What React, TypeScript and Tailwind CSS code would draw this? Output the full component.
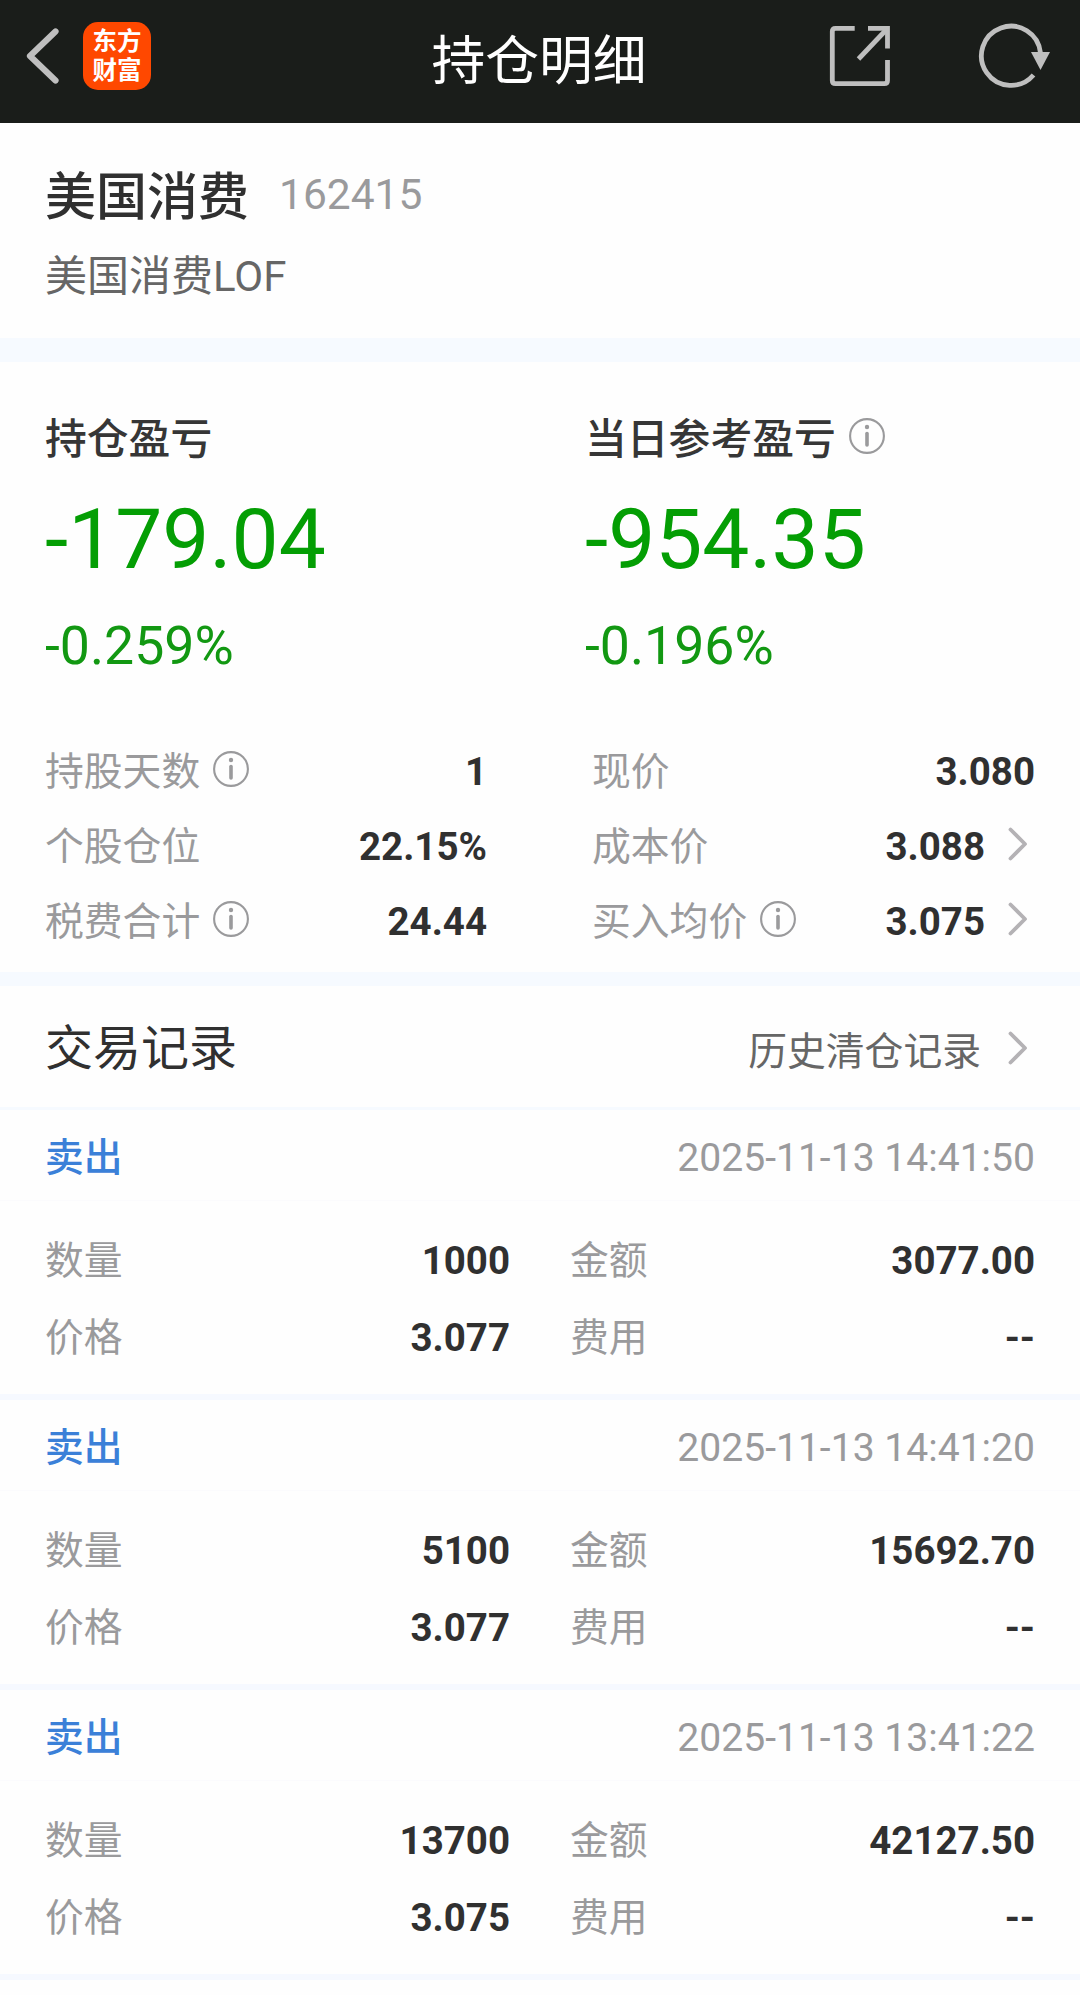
import React from "react";

function InfoIcon() {
  return (
    <svg className="h-9 w-9 shrink-0" viewBox="0 0 36 36" fill="none">
      <circle cx="18" cy="18" r="16.9" stroke="#9a9a9c" strokeWidth="2.1" />
      <circle cx="18" cy="9" r="2.2" fill="#9a9a9c" />
      <path d="M18 15.5V27" stroke="#9a9a9c" strokeWidth="3.6" strokeLinecap="round" />
    </svg>
  );
}

function Chevron() {
  return (
    <svg className="h-9 w-5 shrink-0" viewBox="0 0 20 36" fill="none">
      <path d="M2.5 3.5L17 18L2.5 32.5" stroke="#b4b2b5" strokeWidth="3.8" strokeLinecap="round" strokeLinejoin="round" />
    </svg>
  );
}

function Header() {
  return (
    <header className="grid h-[123px] grid-cols-3 items-start bg-[#1a1d1a] text-white">
      <div className="flex pl-6 pt-[22px]">
        <svg className="h-[68px] w-9" viewBox="0 0 36 68" fill="none">
          <path d="M31.5 9.5L6 34L31.5 58.5" stroke="#bfbfbf" strokeWidth="6.2" strokeLinecap="round" strokeLinejoin="round" />
        </svg>
        <div className="ml-[23px] h-[68px] w-[68px] rounded-[15px] bg-[#ff4800] pt-[5px] text-center text-[24.5px] leading-[29px] font-bold">
          <div>东方</div>
          <div>财富</div>
        </div>
      </div>
      <h1 className="h-[116px] pt-[1.5px] pr-[2px] text-center text-[53.8px] leading-[120px]">持仓明细</h1>
      <div className="flex justify-end gap-[84px] pr-[28px] pt-[22px]">
        <svg className="h-[68px] w-[66px]" viewBox="0 0 66 68" fill="none" stroke="#bfbfbf" strokeWidth="4.8">
          <path d="M28.7 6.3H9.5Q6.3 6.3 6.3 9.5V58.5Q6.3 61.7 9.5 61.7H58.3Q61.5 61.7 61.5 58.5V38" />
          <path d="M42 6.3H61.5V26.5" />
          <path d="M32.5 37L60.5 7.5" />
        </svg>
        <svg className="h-[68px] w-[76px]" viewBox="0 0 76 68" fill="none">
          <path d="M64.5 31A29.6 29.6 0 1 0 57.5 53" stroke="#bfbfbf" strokeWidth="4.8" />
          <path d="M55 30H74L64.5 48Z" fill="#bfbfbf" />
        </svg>
      </div>
    </header>
  );
}

function Profit({ label, value, percent, info }: { label: string; value: string; percent: string; info?: boolean }) {
  return (
    <div className="w-[540px] shrink-0">
      <div className="flex h-[50px] items-center gap-[13px]">
        <span className="pt-[2px] text-[41.8px] leading-[50px] font-medium text-[#363636]">{label}</span>
        {info && (
          <span className="pb-[6px]">
            <InfoIcon />
          </span>
        )}
      </div>
      <div className="mt-[25px] h-[100px] text-[83.8px] leading-[100px] text-[#049e04]">{value}</div>
      <div className="mt-[24px] h-[68px] text-[53.6px] leading-[66px] text-[#129812]">{percent}</div>
    </div>
  );
}

function Stat({ label, value, info, arrow }: { label: string; value: string; info?: boolean; arrow?: boolean }) {
  return (
    <div className="flex h-[75px] items-center">
      <span className="text-[38.8px] leading-[75px] text-[#9a9a9c]">{label}</span>
      {info && (
        <span className="ml-[13px] pb-[5px]">
          <InfoIcon />
        </span>
      )}
      <span className="ml-auto pb-px text-[38.5px] leading-[75px] font-bold text-[#303030]">{value}</span>
      {arrow && (
        <span className="mr-[7px] ml-[23px] pb-[5px]">
          <Chevron />
        </span>
      )}
    </div>
  );
}

function Field({ label, value }: { label: string; value: string }) {
  return (
    <div className="flex h-[77px] items-center justify-between leading-[77px]">
      <span className="text-[38.8px] text-[#9a9a9c]">{label}</span>
      <span className="pb-px text-[38.5px] font-bold text-[#303030]">{value}</span>
    </div>
  );
}

type Trade = { time: string; count: string; amount: string; price: string };

function Record({ time, count, amount, price }: Trade) {
  return (
    <article className="h-[290px] border-b-[6px] border-[#f6f9ff]">
      <div className="flex h-[91px] items-center justify-between border-b border-[#fbfbfd] px-[45px] pt-[5px] leading-[85px]">
        <span className="text-[38.8px] font-medium text-[#3b80d8]">卖出</span>
        <span className="pt-px text-[39.1px] text-[#9a9a9c]">{time}</span>
      </div>
      <div className="grid grid-cols-[465px_465px] gap-x-[60px] pl-[45px] pt-[21px]">
        <Field label="数量" value={count} />
        <Field label="金额" value={amount} />
        <Field label="价格" value={price} />
        <Field label="费用" value="--" />
      </div>
    </article>
  );
}

const trades: Trade[] = [
  { time: "2025-11-13 14:41:50", count: "1000", amount: "3077.00", price: "3.077" },
  { time: "2025-11-13 14:41:20", count: "5100", amount: "15692.70", price: "3.077" },
  { time: "2025-11-13 13:41:22", count: "13700", amount: "42127.50", price: "3.075" },
];

export default function App() {
  return (
    <div className="h-[1995px] w-[1080px] overflow-hidden bg-[#fefefe] font-['Roboto','Noto_Sans_CJK_SC',sans-serif]">
      <Header />
      <section className="h-[215px] px-[45px] pt-[42px]">
        <div className="flex h-[62px] items-center leading-[62px]">
          <span className="pt-[3px] text-[51px] font-medium text-[#303030]">美国消费</span>
          <span className="ml-[30px] pb-[2px] text-[42.5px] text-[#9a9a9c]">162415</span>
        </div>
        <div className="mt-[22px] h-[56px] text-[42px] leading-[56px] text-[#666666]">美国消费LOF</div>
      </section>
      <div className="h-6 bg-[#f6faff]" />
      <section className="h-[610px] pt-[52px]">
        <div className="flex pl-[45px]">
          <Profit label="持仓盈亏" value="-179.04" percent="-0.259%" />
          <Profit label="当日参考盈亏" value="-954.35" percent="-0.196%" info />
        </div>
        <div className="grid grid-cols-[442px_443px] gap-x-[105px] pt-[53px] pl-[45px]">
          <Stat label="持股天数" value="1" info />
          <Stat label="现价" value="3.080" />
          <Stat label="个股仓位" value="22.15%" />
          <Stat label="成本价" value="3.088" arrow />
          <Stat label="税费合计" value="24.44" info />
          <Stat label="买入均价" value="3.075" info arrow />
        </div>
      </section>
      <div className="h-[14px] bg-[#f6faff]" />
      <section>
        <div className="flex h-[124px] items-center border-b-[3px] border-[#f6faff] pr-[52px] pl-[45px]">
          <h2 className="pt-[5px] text-[48px] leading-[116px] text-[#303030]">交易记录</h2>
          <span className="ml-auto pt-[11px] text-[38.8px] leading-[110px] text-[#666666]">历史清仓记录</span>
          <span className="ml-[27px] pt-[3px]">
            <Chevron />
          </span>
        </div>
        {trades.map((trade) => (
          <Record key={trade.time} {...trade} />
        ))}
      </section>
    </div>
  );
}
